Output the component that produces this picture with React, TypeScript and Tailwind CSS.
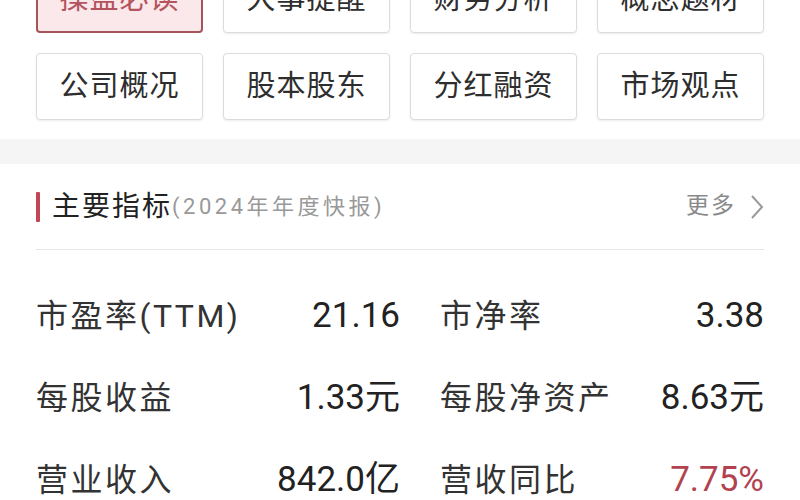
import React from "react";

const font = { fontFamily: 'Roboto, "Noto Sans CJK SC", sans-serif' };

const buttons1 = ["操盘必读", "大事提醒", "财务分析", "概念题材"];
const buttons2 = ["公司概况", "股本股东", "分红融资", "市场观点"];

const rows: [string, string, string, string, boolean][] = [
  ["市盈率(TTM)", "21.16", "市净率", "3.38", false],
  ["每股收益", "1.33元", "每股净资产", "8.63元", false],
  ["营业收入", "842.0亿", "营收同比", "7.75%", true],
];

export default function App() {
  return (
    <div className="w-[800px] h-[500px] overflow-hidden bg-white" style={font}>
      <div className="px-[36px] -mt-[34px] grid grid-cols-4 gap-x-[20px] gap-y-[20px]">
        {[...buttons1, ...buttons2].map((b, i) => (
          <div
            key={b}
            className={
              "h-[67px] rounded-[4px] flex items-center justify-center text-[29px] tracking-[1px] " +
              (i === 0
                ? "border-2 border-[#a5545c] bg-[#fbe8ea] text-[#b4545e]"
                : "border border-[#dcdcdc] bg-white text-[#2e2e2e] shadow-[0_1px_2px_rgba(0,0,0,0.08)]")
            }
          >
            {b}
          </div>
        ))}
      </div>
      <div className="h-[19px]" />
      <div className="h-[25px] bg-[#f5f5f5]" />
      <div className="px-[36px]">
        <div className="h-[86px] flex items-center border-b border-[#e6e6e6]">
          <div className="w-[4px] h-[30px] bg-[#c24655] rounded-[1px]" />
          <div className="ml-[12px] text-[28px] tracking-[2px] text-[#222]">主要指标</div>
          <div className="text-[22px] tracking-[3.5px] text-[#999]">(2024年年度快报)</div>
          <div className="ml-auto flex items-center gap-[14px] text-[23px] tracking-[2px] text-[#8a8a8a]">
            <span>更多</span>
            <svg width="14" height="26" viewBox="0 0 14 26" fill="none">
              <polyline points="2,2 12,13 2,24" stroke="#9a9a9a" strokeWidth="2" />
            </svg>
          </div>
        </div>
        <div className="pt-[25px] grid grid-cols-[364px_1fr] gap-x-[40px]">
          {rows.map(([l1, v1, l2, v2, red]) => (
            <React.Fragment key={l1}>
              <div className="h-[82px] flex items-center justify-between">
                <span className="text-[32px] tracking-[2.5px] text-[#333]">{l1}</span>
                <span className="text-[35px] text-[#222]">{v1}</span>
              </div>
              <div className="h-[82px] flex items-center justify-between">
                <span className="text-[32px] tracking-[2.5px] text-[#333]">{l2}</span>
                <span className={"text-[35px] " + (red ? "text-[#b2424f]" : "text-[#222]")}>{v2}</span>
              </div>
            </React.Fragment>
          ))}
        </div>
      </div>
    </div>
  );
}
